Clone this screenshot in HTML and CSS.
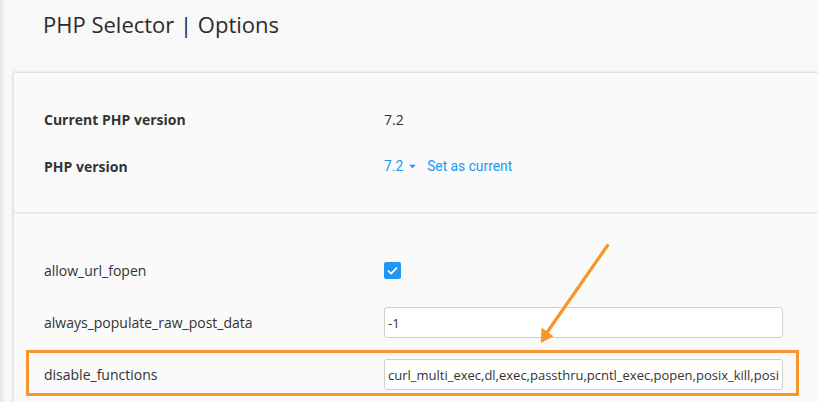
FILE: index.html
```html
<!DOCTYPE html>
<html>
<head>
<meta charset="utf-8">
<link rel="stylesheet" href="styles.css">
</head>
<body>
<div class="page">
  <h1 class="title">PHP Selector | Options</h1>
  <div class="panel">
    <section class="section section-top">
      <div class="row">
        <div class="label label-bold">Current PHP version</div>
        <div class="value">7.2</div>
      </div>
      <div class="row">
        <div class="label label-bold">PHP version</div>
        <div class="value version-links">
          <span class="link">7.2</span>
          <svg class="caret" width="7" height="5" viewBox="0 0 7 5"><path d="M0 0.8H7L3.5 4.3Z" fill="#2196f3"/></svg>
          <span class="link set-current">Set as current</span>
        </div>
      </div>
    </section>
    <section class="section section-options">
      <div class="row">
        <div class="label">allow_url_fopen</div>
        <div class="value">
          <span class="checkbox">
            <svg width="17" height="17" viewBox="0 0 17 17"><path d="M4 8.6L7.1 11.6L13 5.6" fill="none" stroke="#fff" stroke-width="1.7"/></svg>
          </span>
        </div>
      </div>
      <div class="row">
        <div class="label">always_populate_raw_post_data</div>
        <div class="value"><input class="text-input" type="text" value="-1"></div>
      </div>
      <div class="row">
        <div class="label">disable_functions</div>
        <div class="value"><input class="text-input" type="text" value="curl_multi_exec,dl,exec,passthru,pcntl_exec,popen,posix_kill,posix_mkfifo,posix_setpgid,posix_setsid"></div>
      </div>
    </section>
  </div>
  <div class="highlight"></div>
  <svg class="arrow" width="818" height="402" viewBox="0 0 818 402">
    <line x1="607.5" y1="245.5" x2="548" y2="331" stroke="#f8962a" stroke-width="3.2" stroke-linecap="round"/>
    <path d="M540.8 343L553.5 336.2L541.5 327.6Z" fill="#f8962a"/>
  </svg>
</div>
</body>
</html>
```
FILE: styles.css
```css
html, body {
  margin: 0;
  padding: 0;
  overflow: hidden;
}
body {
  background: linear-gradient(to right, #e2e2e2 0, #f1f1f1 3px, #f8f8f8 6px) #f8f8f8;
  font-family: "Open Sans", "DejaVu Sans", sans-serif;
  font-size: 14px;
  color: #333;
  width: 818px;
  height: 402px;
}
.page {
  position: relative;
  height: 402px;
  overflow: hidden;
}
.title {
  margin: 0;
  padding: 9px 0 0 43px;
  height: 72px;
  box-sizing: border-box;
  font-size: 22px;
  line-height: 30px;
  font-weight: 400;
  color: #2b2b2b;
}
.panel {
  margin-left: 13px;
  margin-right: -20px;
  background: #fafafa;
  border-top: 1px solid #e4e4e4;
  border-left: 1px solid #e4e4e4;
  box-shadow: -1px 0 3px rgba(0,0,0,0.06), 0 -1px 2px rgba(0,0,0,0.04);
  height: 330px;
  box-sizing: border-box;
  overflow: hidden;
}
.section {
  display: flex;
  flex-direction: column;
  padding-left: 30px;
}
.section-top {
  padding-top: 30px;
  padding-bottom: 30px;
  gap: 15px;
  border-bottom: 2px solid #ececec;
}
.section-top .row {
  height: 32px;
}
.section-options {
  padding-top: 41px;
  gap: 21px;
}
.section-options .row {
  height: 31px;
  flex-shrink: 0;
}
.row {
  display: grid;
  grid-template-columns: 340px 400px;
  align-items: center;
}
.label {
  color: #333;
}
.label-bold {
  font-weight: 700;
}
.value {
  display: flex;
  align-items: center;
}
.version-links {
  font-family: Roboto, "Liberation Sans", sans-serif;
  font-size: 13.8px;
}
.link {
  color: #2196f3;
}
.caret {
  margin-left: 6px;
}
.set-current {
  margin-left: 11px;
}
.checkbox {
  width: 17px;
  height: 17px;
  border-radius: 2px;
  background: #2196f3;
  display: flex;
}
.text-input {
  box-sizing: border-box;
  width: 399px;
  height: 31px;
  margin: 0;
  padding: 0 3px 0 3px;
  border: 1px solid #cfcfcf;
  border-radius: 3px;
  background: #fff;
  font-family: "Open Sans", "DejaVu Sans", sans-serif;
  font-size: 13px;
  color: #333;
  outline: none;
}
.highlight {
  position: absolute;
  left: 26px;
  top: 350px;
  width: 773px;
  height: 46px;
  box-sizing: border-box;
  border: 3px solid #f8962a;
  pointer-events: none;
}
.arrow {
  position: absolute;
  left: 0;
  top: 0;
  pointer-events: none;
}
```
